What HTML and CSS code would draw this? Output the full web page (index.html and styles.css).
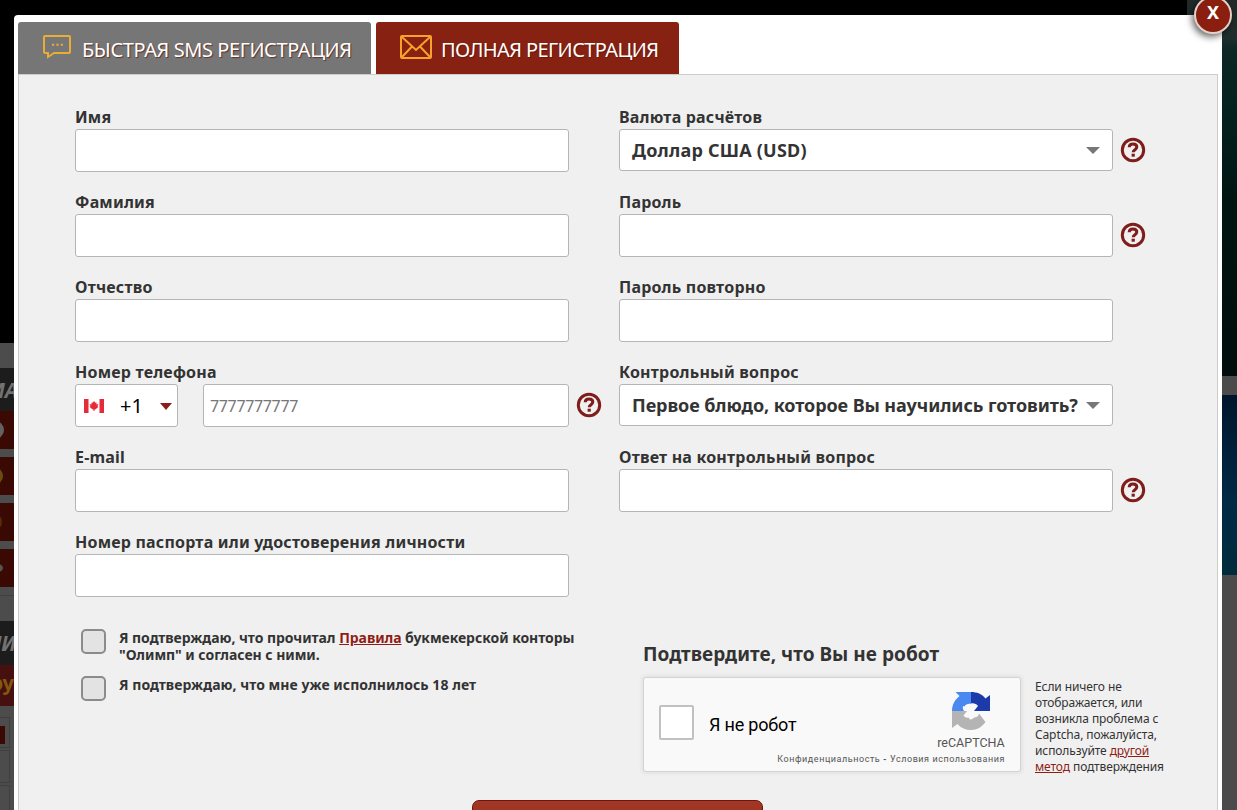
FILE: index.html
```html
<!DOCTYPE html>
<html lang="ru">
<head>
    <meta charset="UTF-8">
    <title>Регистрация</title>
    <link rel="stylesheet" href="styles.css">
</head>
<body>
    <div class="page">
        <div class="page-left">
            <div class="title">МА</div>
            <div class="item"><span class="ball"></span></div>
            <div class="item"><span class="ball gold"></span></div>
            <div class="item"><span class="ball brown"></span></div>
            <div class="item"><span class="ball small"></span></div>
            <div class="divider"></div>
            <div class="title title-second">ИИ</div>
            <div class="promo">ру</div>
            <div class="cell"><span></span></div>
            <div class="cell tall"></div>
            <div class="cell tall"></div>
        </div>
        <div class="page-right">
            <div class="banner-green"></div>
            <div class="banner-blue"></div>
        </div>
    </div>

    <div class="modal">
        <button class="close">X</button>
        <div class="tabs">
            <div class="tab">
                <svg width="30" height="26" viewBox="0 0 30 26" fill="none" stroke="#e9ad35" stroke-width="2">
                    <path d="M3 2H27Q28 2 28 3V18Q28 19 27 19H12L6 23V19H3Q2 19 2 18V3Q2 2 3 2Z"/>
                    <path d="M10 10.8h2.2M14.4 10.8h2.2M18.8 10.8h2.2"/>
                </svg>
                <span class="t-sms">БЫСТРАЯ SMS РЕГИСТРАЦИЯ</span>
            </div>
            <div class="tab active">
                <svg width="32" height="26" viewBox="0 0 32 26" fill="none" stroke="#f9a22b" stroke-width="2">
                    <rect x="1" y="2" width="30" height="22" rx="1"/>
                    <path d="M2 3L16 16L30 3M2 23L12 12.5M30 23L20 12.5"/>
                </svg>
                <span class="t-full">ПОЛНАЯ РЕГИСТРАЦИЯ</span>
            </div>
        </div>

        <form class="content">
            <div class="fields">
                <div class="field">
                    <label>Имя</label>
                    <div class="line"><input type="text"></div>
                </div>
                <div class="field">
                    <label>Валюта расчётов</label>
                    <div class="line">
                        <div class="select"><span class="v-usd">Доллар США (USD)</span><i class="arrow"></i></div>
                        <svg class="help" viewBox="0 0 26 26"><circle cx="13" cy="13" r="10.7"/><path d="M9.2 10.3C9.2 8 10.8 7 13 7s3.8 1.2 3.8 3.1c0 2.6-3.6 2.6-3.6 5.2"/><path d="M11.6 18.2h3.2"/></svg>
                    </div>
                </div>
                <div class="field">
                    <label>Фамилия</label>
                    <div class="line"><input type="text"></div>
                </div>
                <div class="field">
                    <label>Пароль</label>
                    <div class="line">
                        <input type="password">
                        <svg class="help" viewBox="0 0 26 26"><circle cx="13" cy="13" r="10.7"/><path d="M9.2 10.3C9.2 8 10.8 7 13 7s3.8 1.2 3.8 3.1c0 2.6-3.6 2.6-3.6 5.2"/><path d="M11.6 18.2h3.2"/></svg>
                    </div>
                </div>
                <div class="field">
                    <label>Отчество</label>
                    <div class="line"><input type="text"></div>
                </div>
                <div class="field">
                    <label>Пароль повторно</label>
                    <div class="line"><input type="password"></div>
                </div>
                <div class="field">
                    <label>Номер телефона</label>
                    <div class="line">
                        <div class="code">
                            <svg width="20" height="14" viewBox="0 0 20 14">
                                <rect width="20" height="14" fill="#fff"/>
                                <path fill="#e62a37" d="M0 0h4.500v14H0zM15.500 0H20v14h-4.500zM10 2l1.300 1.800 1.200-.4v2l2-.5-1 2.200.8.9-3 2.400h-.8V12h-1v-1.600h-.8l-3-2.400.8-.9-1-2.200 2 .5v-2l1.200.4z"/>
                            </svg>
                            <span>+1</span>
                            <i class="arrow red"></i>
                        </div>
                        <input type="text" class="phone" placeholder="7777777777">
                        <svg class="help" viewBox="0 0 26 26"><circle cx="13" cy="13" r="10.7"/><path d="M9.2 10.3C9.2 8 10.8 7 13 7s3.8 1.2 3.8 3.1c0 2.6-3.6 2.6-3.6 5.2"/><path d="M11.6 18.2h3.2"/></svg>
                    </div>
                </div>
                <div class="field">
                    <label>Контрольный вопрос</label>
                    <div class="line">
                        <div class="select"><span class="v-question">Первое блюдо, которое Вы научились готовить?</span><i class="arrow"></i></div>
                    </div>
                </div>
                <div class="field">
                    <label>E-mail</label>
                    <div class="line"><input type="text"></div>
                </div>
                <div class="field">
                    <label>Ответ на контрольный вопрос</label>
                    <div class="line">
                        <input type="text">
                        <svg class="help" viewBox="0 0 26 26"><circle cx="13" cy="13" r="10.7"/><path d="M9.2 10.3C9.2 8 10.8 7 13 7s3.8 1.2 3.8 3.1c0 2.6-3.6 2.6-3.6 5.2"/><path d="M11.6 18.2h3.2"/></svg>
                    </div>
                </div>
                <div class="field">
                    <label>Номер паспорта или удостоверения личности</label>
                    <div class="line"><input type="text"></div>
                </div>
            </div>

            <div class="bottom">
                <div class="agreements">
                    <div class="agree">
                        <span class="check"></span>
                        <p class="rules">Я подтверждаю, что прочитал <a href="#">Правила</a> букмекерской конторы<br>"Олимп" и согласен с ними.</p>
                    </div>
                    <div class="agree">
                        <span class="check"></span>
                        <p>Я подтверждаю, что мне уже исполнилось 18 лет</p>
                    </div>
                </div>
                <div class="robot">
                    <h3>Подтвердите, что Вы не робот</h3>
                    <div class="robot-row">
                        <div class="captcha">
                            <span class="captcha-check"></span>
                            <span class="captcha-label">Я не робот</span>
                            <div class="captcha-brand">
                                <svg width="38" height="38" viewBox="0 0 38 38">
                                    <path fill="#4a8af0" d="M19 0v12c-3-.5-5.500.5-6.500 2.500l-1.500-.5c-.5 2 0 3.500 1 5H0C0 12.500 3 7.500 7.500 4L3.500 0z"/>
                                    <path fill="#1c3aa9" d="M19 0c6 0 11 2 14.500 6.500L38 3v16H22l4-5c-1.500-2-4-3-7-2.500z"/>
                                    <path fill="#b4b4b4" d="M0 19h15l-3.500 4.500c1.500 2 3 2.500 5 2 1 2.500 3.500 2.500 5.500 0 3 0 4.500-1.500 5-4l6.500 8.500c-3.500 5-8.500 8-14.500 8-5.500 0-10-2-13.500-6L0 36z"/>
                                </svg>
                                <span>reCAPTCHA</span>
                            </div>
                            <div class="captcha-links">Конфиденциальность <b>-</b> Условия использования</div>
                        </div>
                        <p class="note">Если ничего не<br>отображается, или<br>возникла проблема с<br>Captcha, пожалуйста,<br>используйте <a href="#">другой<br>метод</a> подтверждения</p>
                    </div>
                </div>
            </div>
            <div class="submit"></div>
        </form>
    </div>
</body>
</html>
```
FILE: styles.css
```css
* {
    box-sizing: border-box;
    margin: 0;
    padding: 0;
}
body {
    height: 810px;
    overflow: hidden;
    background: #000;
    font-family: "Noto Sans", "Open Sans", sans-serif;
    color: #333;
}

/* dimmed page behind the dialog */
.page {
    display: flex;
    justify-content: space-between;
    height: 810px;
}
.page-left {
    width: 14px;
    margin-top: 343px;
    padding-top: 25px;
    background: #4c4c4c;
    overflow: hidden;
}
.title {
    display: flex;
    justify-content: flex-end;
    align-items: center;
    height: 43px;
    margin-right: -4px;
    background: #1c1c1c;
    color: #727272;
    font-size: 21px;
    font-weight: bold;
    font-style: italic;
}
.title-second {
    height: 44px;
    margin-right: -2px;
}
.item {
    display: flex;
    justify-content: flex-end;
    align-items: center;
    height: 38px;
    margin-bottom: 8px;
    padding-right: 10px;
    background: #3b0904;
}
.ball {
    flex: none;
    width: 18px;
    height: 18px;
    border-radius: 50%;
    background: #626262;
}
.ball.gold {
    margin-right: 1px;
    background: #6b4c10;
}
.ball.brown {
    margin-right: 2px;
    background: #5b2a06;
}
.ball.small {
    height: 10px;
    margin-right: 1px;
    background: #5a5555;
}
.divider {
    height: 26px;
    border-top: 1px solid #404040;
}
.promo {
    display: flex;
    justify-content: flex-end;
    height: 41px;
    margin-bottom: 11px;
    background: #45100f;
    color: #84560e;
    font-size: 20px;
    font-weight: bold;
    line-height: 36px;
}
.cell {
    width: 10px;
    height: 31px;
    padding-top: 8px;
    border: 1px solid #3f3f3f;
    border-left: 0;
    margin-bottom: 2px;
}
.cell.tall {
    height: 33px;
}
.cell span {
    display: block;
    width: 5px;
    height: 18px;
    background: #3b0904;
}
.page-right {
    width: 50px;
    height: 810px;
    background: #4b4b4b;
}
.banner-green {
    height: 376px;
    margin-bottom: 19px;
    background: linear-gradient(#222a29 0, #1d2f2d 38px, #0c2724 50px, #02211e 120px, #001512 200px, #000d0c 376px);
}
.banner-blue {
    height: 180px;
    background: linear-gradient(#00152d, #002a45 60%, #002b3c);
}

/* dialog */
.modal {
    position: absolute;
    left: 14px;
    top: 15px;
    width: 1208px;
    height: 795px;
    padding: 7px 4px 0;
    background: #fff;
    border-radius: 4px 4px 0 0;
}
.close {
    position: absolute;
    top: -19px;
    right: -10px;
    width: 38px;
    height: 38px;
    padding-bottom: 6px;
    border: 2px solid #e5cfca;
    border-radius: 50%;
    background: #8a1f10;
    color: #fff;
    font: bold 18px "Noto Sans", sans-serif;
    box-shadow: -2px 3px 7px rgba(0, 0, 0, 0.6);
}
.tabs {
    display: flex;
    gap: 5px;
    height: 52px;
}
.tab {
    display: flex;
    align-items: center;
    width: 353px;
    padding-left: 24px;
    border-radius: 3px 3px 0 0;
    background: #767676;
    color: #fff;
    font-size: 20px;
    text-shadow: 1px 1px 1px rgba(90, 20, 10, 0.7);
    white-space: nowrap;
}
.tab svg {
    margin-right: 10px;
    margin-bottom: 3px;
}
.tab span {
    margin-top: 2px;
}
.tab.active {
    width: 303px;
    background: #872213;
}
.tab.active svg {
    margin-right: 9px;
}
.t-sms {
    letter-spacing: -0.42px;
}
.t-full {
    letter-spacing: -0.6px;
}
.content {
    height: 736px;
    padding: 34px 0 0 56px;
    border: 1px solid #ccc;
    border-bottom: 0;
    background: #f0f0f0;
    overflow: hidden;
}
.fields {
    display: grid;
    grid-template-columns: 544px 544px;
    grid-auto-rows: 85px;
}
.field label {
    display: block;
    height: 20px;
    font-size: 16px;
    font-weight: bold;
    letter-spacing: 0.2px;
    line-height: 16px;
    white-space: nowrap;
}
.line {
    display: flex;
    align-items: flex-start;
}
input,
.select,
.code {
    flex: none;
    width: 494px;
    height: 43px;
    border: 1px solid #b5b5b5;
    border-radius: 3px;
    background: #fff;
    outline: none;
}
.select {
    display: flex;
    justify-content: space-between;
    align-items: center;
    height: 42px;
    padding: 0 12px;
    font-size: 18px;
    font-weight: bold;
    white-space: nowrap;
}
.v-usd {
    letter-spacing: 0.22px;
}
.v-question {
    letter-spacing: -0.08px;
}
.arrow {
    flex: none;
    border: 7px solid transparent;
    border-top-color: #777;
    border-bottom: 0;
}
.arrow.red {
    margin-top: 2px;
    border-top-color: #8a1f1a;
    border-left-width: 6px;
    border-right-width: 6px;
}
.code {
    display: flex;
    align-items: center;
    width: 103px;
    margin-right: 25px;
    padding: 0 5px 0 8px;
    font-size: 20px;
    color: #000;
}
.code span {
    margin-left: 16px;
    margin-right: auto;
}
.phone {
    width: 366px;
    padding-left: 6px;
    font-family: "Noto Sans", sans-serif;
    font-size: 16px;
    letter-spacing: -0.35px;
}
.phone::placeholder {
    color: #777;
}
.help {
    flex: none;
    width: 26px;
    height: 26px;
    margin: 8px 0 0 7px;
    fill: none;
    stroke: #7f1d1b;
    stroke-width: 3;
}
.bottom {
    display: flex;
    height: 181px;
}
.agreements {
    width: 568px;
    padding: 10px 0 0 6px;
}
.agree {
    display: flex;
    height: 47px;
}
.check {
    flex: none;
    width: 25px;
    height: 25px;
    margin-right: 13px;
    border: 2px solid #8b8b8b;
    border-radius: 5px;
    background: #e3e3e3;
}
.agree p {
    font-size: 14px;
    font-weight: bold;
    letter-spacing: 0.04px;
    line-height: 17px;
    white-space: nowrap;
}
.agree .rules {
    letter-spacing: -0.05px;
}
a {
    color: #8f1d16;
}
.robot {
    padding-top: 24px;
}
.robot h3 {
    height: 34px;
    font-size: 19px;
    letter-spacing: 0.04px;
    line-height: 22px;
    white-space: nowrap;
}
.robot-row {
    display: flex;
}
.captcha {
    display: grid;
    grid-template-columns: 50px 1fr 68px;
    grid-template-rows: 72px 20px;
    width: 378px;
    height: 95px;
    padding: 0 15px;
    border: 1px solid #d3d3d3;
    border-radius: 3px;
    background: #f9f9f9;
    box-shadow: 0 0 4px 1px rgba(0, 0, 0, 0.08);
    font-family: Roboto, sans-serif;
}
.captcha-check {
    width: 35px;
    height: 35px;
    margin-top: 27px;
    border: 2px solid #c1c1c1;
    border-radius: 2px;
    background: #fff;
}
.captcha-label {
    margin-top: 35px;
    font-size: 18px;
    letter-spacing: -0.2px;
    line-height: 24px;
    color: #000;
}
.captcha-brand {
    display: flex;
    flex-direction: column;
    align-items: center;
    padding-top: 14px;
    color: #555;
    font-size: 12.5px;
    line-height: 26px;
}
.captcha-brand svg {
    flex: none;
}
.captcha-links {
    grid-column: 1 / 4;
    text-align: right;
    font-size: 9px;
    letter-spacing: 0.56px;
    line-height: 18px;
    color: #555;
    white-space: nowrap;
}
.note {
    margin: 2px 0 0 14px;
    font-size: 12px;
    letter-spacing: -0.1px;
    line-height: 16px;
    white-space: nowrap;
}
.submit {
    width: 291px;
    height: 40px;
    margin-left: 397px;
    border: 1px solid #6f140d;
    border-radius: 7px;
    background: linear-gradient(#a33725, #8c2a1a);
}
```
